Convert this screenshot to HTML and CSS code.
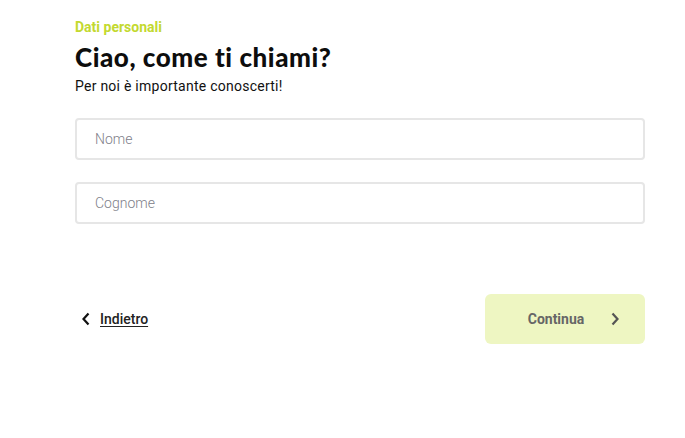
FILE: index.html
```html
<!DOCTYPE html>
<html lang="it">
<head>
<meta charset="utf-8">
<link rel="stylesheet" href="styles.css">
</head>
<body>
<main class="form">
  <div class="eyebrow">Dati personali</div>
  <h1 class="title">Ciao, come ti chiami?</h1>
  <p class="subtitle">Per noi è importante conoscerti!</p>
  <div class="fields">
    <div class="field">Nome</div>
    <div class="field">Cognome</div>
  </div>
  <div class="actions">
    <a class="back">
      <svg class="chev" width="10" height="14" viewBox="0 0 10 14"><path d="M7.5 1.5 L2.5 7 L7.5 12.5" fill="none" stroke="#111" stroke-width="2.2"/></svg>
      <span class="back-text">Indietro</span>
    </a>
    <div class="next">
      <span>Continua</span>
      <svg class="chev" width="10" height="14" viewBox="0 0 10 14"><path d="M2.5 1.5 L7.5 7 L2.5 12.5" fill="none" stroke="#555" stroke-width="2.2"/></svg>
    </div>
  </div>
</main>
</body>
</html>
```
FILE: styles.css
```css
html, body { margin: 0; padding: 0; background: #fff; }
body { font-family: Roboto, "Liberation Sans", sans-serif; color: #111; }
.form { width: 570px; margin-left: 75px; padding-top: 18px; display: flex; flex-direction: column; }
.eyebrow { color: #c3d92f; font-size: 14px; font-weight: 700; line-height: 18px; }
.title { font-family: Lato, "Liberation Sans", sans-serif; font-weight: 900; font-size: 26px; line-height: 30px; margin: 6px 0 0; letter-spacing: 0.55px; color: #0d0d0d; }
.subtitle { margin: 5px 0 0; font-size: 14px; line-height: 18px; color: #111; letter-spacing: 0.25px; }
.fields { display: flex; flex-direction: column; gap: 22px; margin-top: 23px; }
.field { height: 38px; border: 2px solid #e6e6e6; border-radius: 4px; padding: 0 18px; display: flex; align-items: center; font-size: 14px; color: #808089; font-weight: 300; }
.actions { display: flex; justify-content: space-between; align-items: center; margin-top: 70px; }
.back { display: flex; align-items: center; gap: 9px; padding-left: 6px; font-size: 14px; font-weight: 500; color: #222; }
.back-text { text-decoration: underline; text-underline-offset: 2px; }
.next { width: 160px; height: 50px; background: #eef6c2; border-radius: 6px; display: flex; align-items: center; justify-content: center; gap: 26px; padding-left: 18px; box-sizing: border-box; font-size: 14px; font-weight: 700; color: #666; }
```
